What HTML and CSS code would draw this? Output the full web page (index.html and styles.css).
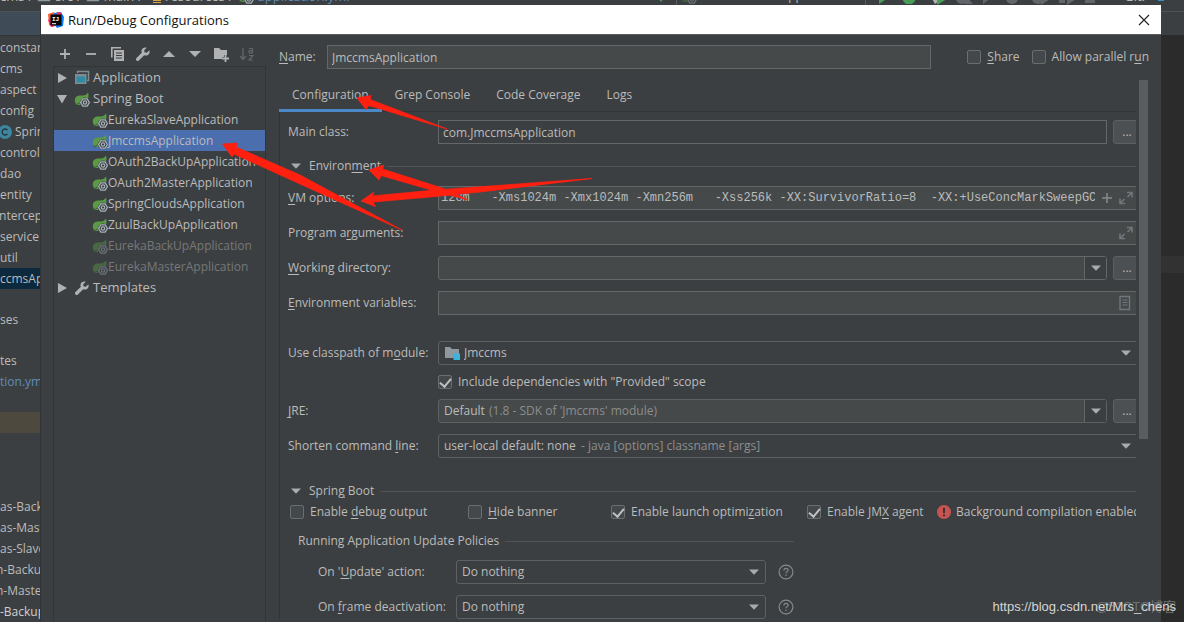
FILE: index.html
```html
<!DOCTYPE html>
<html lang="en">
<head>
<meta charset="utf-8">
<title>Run/Debug Configurations</title>
<link rel="stylesheet" href="styles.css">
</head>
<body>
<svg class="defs" aria-hidden="true">
  <symbol id="spring" viewBox="0 0 16 16">
    <path d="M1 11C0 6 3 4.500 7 4.500C10.500 4.500 12.500 4 14 1.500C15 5 14.500 8 12.500 10.500L6 14H2.500Z" fill="#5a9a45"/>
    <path d="M1 14C5 13 9 10 11 7" fill="none" stroke="#3c5a38" stroke-width="1"/>
    <circle cx="11" cy="11.500" r="5" fill="#3c3f41"/>
    <path d="M8.800 7.800h4.400l2.200 3.700l-2.200 3.700H8.800L6.600 11.500Z" fill="#3c3f41" stroke="#a5b0b8" stroke-width="1.300"/>
    <circle cx="11" cy="11.500" r="1.700" fill="none" stroke="#a5b0b8" stroke-width="1.200"/>
  </symbol>
  <symbol id="wrench" viewBox="0 0 16 16">
    <path d="M14.300 4.200L11.800 6.700L9.500 6.300L9.200 4.200L11.700 1.700C9.500 .9 7.200 2 6.600 4C6.300 5 6.400 5.900 6.800 6.800L1.500 12.100C.8 12.800 .8 13.800 1.500 14.500S3.200 15.200 3.900 14.500L9.200 9.200C11.400 10.100 13.800 9 14.500 6.900C14.800 6 14.700 5 14.300 4.200Z" fill="#afb1b3"/>
  </symbol>
  <symbol id="folder" viewBox="0 0 16 16">
    <path d="M1 2h5.500l2 2H15v10H1Z" fill="#8d989f"/>
  </symbol>
  <symbol id="expand" viewBox="0 0 14 14">
    <path d="M8 1.500h5v5M13 1.500L8.500 6M6 12.500H1v-5M1 12.500L5.500 8" fill="none" stroke="#70777b" stroke-width="1.600"/>
  </symbol>
  <symbol id="down" viewBox="0 0 10 6"><path d="M0 .5h10L5 5.700Z" fill="#a8aaab"/></symbol>
  <symbol id="help" viewBox="0 0 16 16">
    <circle cx="8" cy="8" r="6.900" fill="none" stroke="#868a8c" stroke-width="1.200"/>
    <path d="M5.900 6.400C5.900 5 6.800 4.300 8 4.300S10.100 5 10.100 6.200C10.100 7.600 8 7.700 8 9.300M8 10.500v1.400" fill="none" stroke="#868a8c" stroke-width="1.200"/>
  </symbol>
</svg>

<div class="ide">
  <header class="navbar">
    <nav class="crumbs">
      <span>cms</span><span>/</span>
      <svg class="i14"><use href="#folder"/></svg><span>src</span><span>/</span>
      <svg class="i14"><use href="#folder"/></svg><span>main</span><span>/</span>
      <svg class="i14" viewBox="0 0 14 14"><path d="M0 1h5l2 2h7v8H0Z" fill="#8d989f"/><path d="M6 9h8M6 11.500h8M6 13.500h8" stroke="#d9a343"/></svg><span>resources</span><span>/</span>
      <svg class="i16"><use href="#spring"/></svg><span class="blue">application.yml</span>
    </nav>
    <div class="runbar">
      <svg class="i14" viewBox="0 0 14 14"><path d="M2 5l7-5l3 8l-4 5Z" fill="#499c54"/></svg>
      <span class="runname"><svg class="i16 dim"><use href="#spring"/></svg>EurekaMasterApplication</span>
      <svg class="tools" viewBox="0 0 240 18">
        <path d="M4 4l10 6.500L4 17Z" fill="#499c54"/><path d="M28 8h12v6l-3 3h-6l-3-3Z" fill="#499c54"/>
        <path d="M55 8h9v6l-4 3Z" fill="#afb1b3"/><path d="M62 6l10 6l-10 6Z" fill="#499c54"/>
        <g fill="#62666a"><circle cx="87" cy="11" r="6"/><path d="M90 8l8 9h-8ZM108 5l8 6l-8 6Z"/><circle cx="137" cy="11" r="6"/><circle cx="163" cy="11" r="6"/><path d="M166 7l9 5l-9 6ZM184 8h6v8h-6ZM192 6l9 6l-9 6ZM210 7h10v9h-10Z"/></g>
      </svg>
      <span>Git:</span>
      <svg class="i14" viewBox="0 0 14 14"><path d="M4 4h6v8H4Z" fill="#3592c4"/></svg>
    </div>
  </header>
  <div class="workspace">
    <aside class="project">
      <div class="projecthead"></div>
      <ul class="files">
        <li>constant</li><li>cms</li><li>aspect</li><li>config</li>
        <li><svg class="i14" viewBox="0 0 14 14"><circle cx="5" cy="7" r="7" fill="#3e86a0"/><path d="M7.500 5.200A3 3 0 1 0 7.500 8.800" fill="none" stroke="#263238" stroke-width="1.300"/></svg>Spring</li>
        <li>controller</li><li>dao</li><li>entity</li><li class="cut">intercept</li><li>service</li><li>util</li>
        <li class="picked">ccmsApp</li><li class="blank"></li><li>ses</li><li class="blank"></li><li>tes</li>
        <li class="blue">tion.yml</li><li class="blank"></li><li class="brown"></li><li class="space"></li>
        <li>as-Backup</li><li>as-Master</li><li>as-Slave</li><li class="cut">n-Backup</li><li class="cut">n-Master</li><li class="strong">-Backup</li>
      </ul>
    </aside>
    <main class="editor"><div class="caretline"></div></main>
  </div>
</div>

<section class="dialog" role="dialog" aria-labelledby="title">
  <header class="titlebar">
    <svg class="i16" viewBox="0 0 16 16"><path d="M0 2L6 0L8 8L5 15L1 13Z" fill="#f9623a"/><path d="M6 1L13 0L16 5L15 14L9 16L6 12Z" fill="#087cfa"/><path d="M9 0L14 1L13 4H8Z" fill="#fe2857"/><path d="M0 8L5 5L7 14L3 15Z" fill="#fe2857"/><path d="M2.500 2.500h11v11h-11Z" fill="#050505"/><text class="logo" x="4" y="9">IJ</text><path d="M4 11.700h4" stroke="#fff"/></svg>
    <h1 id="title">Run/Debug Configurations</h1>
    <button class="close" aria-label="Close"><svg viewBox="0 0 12 12"><path d="M1 1l10 10M11 1L1 11" stroke="#222" stroke-width="1.100"/></svg></button>
  </header>
  <div class="body">
    <div class="left">
      <div class="toolbar">
        <button aria-label="Add"><svg class="i16" viewBox="0 0 16 16"><path d="M8 3v10M3 8h10" stroke="#afb1b3" stroke-width="1.800"/></svg></button>
        <button aria-label="Remove"><svg class="i16" viewBox="0 0 16 16"><path d="M3 8h10" stroke="#afb1b3" stroke-width="1.800"/></svg></button>
        <button aria-label="Copy"><svg class="i16" viewBox="0 0 16 16"><path d="M2.800 11.500V1.800H12" fill="none" stroke="#afb1b3" stroke-width="1.600"/><path d="M5 4h10v11H5Z" fill="#afb1b3"/><path d="M7 7h6M7 9.500h6M7 12h6" stroke="#3c3f41"/></svg></button>
        <button aria-label="Edit defaults"><svg class="i16"><use href="#wrench"/></svg></button>
        <button aria-label="Move up"><svg class="i16" viewBox="0 0 16 16"><path d="M2 11h12L8 5Z" fill="#afb1b3"/></svg></button>
        <button aria-label="Move down"><svg class="i16" viewBox="0 0 16 16"><path d="M2 5h12l-6 6Z" fill="#afb1b3"/></svg></button>
        <button aria-label="New folder"><svg class="i16" viewBox="0 0 16 16"><path d="M1 2h5l2 2h6v5h-3v2H9v2H1Z" fill="#afb1b3"/><path d="M12.500 9v7M9 12.500h7" stroke="#afb1b3" stroke-width="1.800"/></svg></button>
        <button aria-label="Sort" disabled><svg class="i16" viewBox="0 0 16 16"><path d="M4 2v11M1 10l3 3.500L7 10" fill="none" stroke="#626567" stroke-width="1.400"/><path d="M10 2.500h3.500v4.300H10.200V4.700h3.300M10 9.500h4l-4 4.500h4.200" fill="none" stroke="#626567" stroke-width="1.200"/></svg></button>
      </div>
      <ul class="tree">
        <li class="group"><svg class="twist" viewBox="0 0 10 10"><path d="M1 0l9 5l-9 5Z" fill="#afb1b3"/></svg><svg class="i16" viewBox="0 0 16 16"><path d="M3.500 3V1.500h11v9H13" fill="none" stroke="#7d8b93" stroke-width="1.500"/><path d="M1 4h11.500v10H1Z" fill="#7d8b93"/><path d="M2.500 6.500H11v6H2.500Z" fill="#2f8ba5"/></svg>Application</li>
        <li class="group"><svg class="twist" viewBox="0 0 10 10"><path d="M0 1h10l-5 8.500Z" fill="#afb1b3"/></svg><svg class="i16"><use href="#spring"/></svg>Spring Boot</li>
        <li class="leaf"><svg class="i16"><use href="#spring"/></svg>EurekaSlaveApplication</li>
        <li class="leaf selected"><svg class="i16"><use href="#spring"/></svg>JmccmsApplication</li>
        <li class="leaf"><svg class="i16"><use href="#spring"/></svg>OAuth2BackUpApplication</li>
        <li class="leaf"><svg class="i16"><use href="#spring"/></svg>OAuth2MasterApplication</li>
        <li class="leaf"><svg class="i16"><use href="#spring"/></svg>SpringCloudsApplication</li>
        <li class="leaf"><svg class="i16"><use href="#spring"/></svg>ZuulBackUpApplication</li>
        <li class="leaf dim"><svg class="i16"><use href="#spring"/></svg>EurekaBackUpApplication</li>
        <li class="leaf dim"><svg class="i16"><use href="#spring"/></svg>EurekaMasterApplication</li>
        <li class="group"><svg class="twist" viewBox="0 0 10 10"><path d="M1 0l9 5l-9 5Z" fill="#afb1b3"/></svg><svg class="i16"><use href="#wrench"/></svg>Templates</li>
      </ul>
    </div>
    <div class="right">
      <div class="namerow">
        <label for="name"><u>N</u>ame:</label>
        <input class="field" id="name" type="text" value="JmccmsApplication">
        <label class="check"><input type="checkbox"><span><u>S</u>hare</span></label>
        <label class="check"><input type="checkbox"><span>Allow parallel r<u>u</u>n</span></label>
      </div>
      <div class="scroller">
        <div class="view">
          <div class="tabs" role="tablist">
            <button class="tab active" role="tab">Configuration</button>
            <button class="tab" role="tab">Grep Console</button>
            <button class="tab" role="tab">Code Coverage</button>
            <button class="tab" role="tab">Logs</button>
          </div>
          <div class="panel">
            <div class="row"><label for="main">Main class:</label><div class="control"><input class="field plain" id="main" type="text" value="com.JmccmsApplication"><button class="more">...</button></div></div>
            <div class="separator"><svg class="down"><use href="#down"/></svg><h2>Environ<u>m</u>ent</h2></div>
            <div class="row"><label for="vm"><u>V</u>M options:</label><div class="field box"><input class="mono" id="vm" type="text" value="128m   -Xms1024m -Xmx1024m -Xmn256m   -Xss256k -XX:SurvivorRatio=8  -XX:+UseConcMarkSweepGC"><svg class="i14" viewBox="0 0 14 14"><path d="M7 2v10M2 7h10" stroke="#858a8d" stroke-width="1.500"/></svg><svg class="i14"><use href="#expand"/></svg></div></div>
            <div class="row"><label for="args">Program a<u>r</u>guments:</label><div class="field box"><input id="args" type="text"><svg class="i14"><use href="#expand"/></svg></div></div>
            <div class="row"><label for="dir"><u>W</u>orking directory:</label><div class="control"><div class="combo"><input id="dir" type="text"><button class="drop" aria-label="Show list"><svg class="down"><use href="#down"/></svg></button></div><button class="more">...</button></div></div>
            <div class="row"><label for="env"><u>E</u>nvironment variables:</label><div class="field box"><input id="env" type="text"><svg class="i16" viewBox="0 0 16 16"><path d="M3 1.500h9.500v13H3Z" fill="none" stroke="#70777b" stroke-width="1.400"/><path d="M5.500 5h5M5.500 7.500h5M5.500 10h5" stroke="#70777b"/></svg></div></div>
            <div class="row apart"><label for="module">Use classpath of m<u>o</u>dule:</label><div class="pick"><svg class="i16 lead" viewBox="0 0 16 16"><path d="M1 2h5l2 2h7v9H1Z" fill="#8d989f"/><path d="M9.500 8.500H16V15H9.500Z" fill="#3db2df"/></svg><select class="withicon" id="module"><option>Jmccms</option></select><svg class="down"><use href="#down"/></svg></div></div>
            <div class="row slim"><span></span><label class="check"><input type="checkbox" checked><span>Include dependencies with "Provided" scope</span></label></div>
            <div class="row"><label for="jre"><u>J</u>RE:</label><div class="control"><div class="pick split"><select id="jre"><option>Default</option></select><span class="hint jre">(1.8 - SDK of 'Jmccms' module)</span><span class="cell"><svg class="down"><use href="#down"/></svg></span></div><button class="more">...</button></div></div>
            <div class="row"><label for="shorten">Shorten command <u>l</u>ine:</label><div class="pick"><select id="shorten"><option>user-local default: none</option></select><span class="hint cmd">- java [options] classname [args]</span><svg class="down"><use href="#down"/></svg></div></div>
            <div class="boot">
              <div class="separator"><svg class="down"><use href="#down"/></svg><h2>Sprin<u>g</u> Boot</h2></div>
              <div class="checks">
                <label class="check"><input type="checkbox"><span>Enable <u>d</u>ebug output</span></label>
                <label class="check"><input type="checkbox"><span><u>H</u>ide banner</span></label>
                <label class="check"><input type="checkbox" checked><span>Enable launch optimi<u>z</u>ation</span></label>
                <label class="check"><input type="checkbox" checked><span>Enable JM<u>X</u> agent</span></label>
                <div class="notice"><svg class="i14" viewBox="0 0 14 14"><circle cx="7" cy="7" r="7" fill="#c75450"/><path d="M7 2.800v5.200M7 9.300v2" stroke="#3c3032" stroke-width="2"/></svg>Background compilation enabled</div>
              </div>
              <div class="policies">
                <div class="separator"><h2>Running Application Update Policies</h2></div>
                <div class="policy"><label for="upd">On '<u>U</u>pdate' action:</label><div class="pick"><select id="upd"><option>Do nothing</option></select><svg class="down"><use href="#down"/></svg></div><button class="ask" aria-label="Help"><svg class="i16"><use href="#help"/></svg></button></div>
                <div class="policy"><label for="frame">On <u>f</u>rame deactivation:</label><div class="pick"><select id="frame"><option>Do nothing</option></select><svg class="down"><use href="#down"/></svg></div><button class="ask" aria-label="Help"><svg class="i16"><use href="#help"/></svg></button></div>
              </div>
            </div>
          </div>
        </div>
        <div class="bar"></div>
      </div>
    </div>
  </div>
</section>

<svg class="arrows" width="600" height="240" viewBox="0 0 600 240" aria-hidden="true">
  <path d="M357 98L371 95.500L370 99.500L447 129L369 105.500L366 109.500Z"/>
  <path d="M369 170L384 165L382.500 169L442 188L468 200L438 192L381 175.500L379 180Z"/>
  <path d="M361 201L374 192L372 196L430 190.500L592 178.500L480 192L430 197L373 202L375.500 206.500Z"/>
  <path d="M222.500 144L237.500 143L236 147L300 175L402 230L300 184L234 154L232 157Z"/>
</svg>
<div class="marks"><span class="mark faint">@51CTO博客</span><span class="mark">https://blog.csdn.net/Mrs_chens</span></div>
</body>
</html>
```
FILE: styles.css
```css
* { box-sizing: border-box; }
body {
  margin: 0;
  height: 100vh;
  overflow: hidden;
  position: relative;
  background: #3c3f41;
  color: #bbbbbb;
  font: 12px/20px "Open Sans", "Noto Sans", sans-serif;
}
ul { list-style: none; margin: 0; padding: 0; }
h1, h2 { margin: 0; font-weight: 400; }
svg { display: block; flex: none; }
button, input, select { font: inherit; color: inherit; margin: 0; padding: 0; border: 0; background: none; border-radius: 0; outline: 0; }
u { text-decoration: underline; text-underline-offset: 2px; }
.defs { position: absolute; width: 0; height: 0; }
.i14 { width: 14px; height: 14px; }
.i16 { width: 16px; height: 16px; }
.blue { color: #5c8dbc; }
.dim { opacity: 0.45; }

/* IDE window behind the dialog */
.ide { height: 100%; display: flex; flex-direction: column; }
.navbar { height: 12px; display: flex; justify-content: space-between; align-items: flex-end; padding-bottom: 5px; border-bottom: 1px solid #505355; flex: none; overflow: hidden; font-size: 13px; }
.crumbs, .runbar { display: flex; align-items: center; gap: 4px; height: 20px; white-space: nowrap; }
.runbar { padding-right: 16px; gap: 9px; }
.runname { display: flex; align-items: center; gap: 6px; padding-left: 4px; border-left: 1px solid #5a5d5f; border-right: 1px solid #5a5d5f; padding-right: 22px; }
.runname { font-size: 12px; }
.tools { width: 240px; height: 18px; }
.workspace { flex: 1; display: flex; min-height: 0; }
.project { width: 41px; overflow: hidden; white-space: nowrap; border-right: 1px solid #323537; }
.projecthead { height: 24px; background: #3f4b57; border-bottom: 1px solid #323537; margin-bottom: 1px; }
.files li { height: 21px; line-height: 21px; display: flex; gap: 1px; align-items: center; }
.files .cut { margin-left: -4px; }
.files .blank { height: 20px; }
.files .space { height: 63px; }
.files .picked { background: #0d293e; }
.files .brown { background: #4e493e; }
.strong { color: #d0d0d0; }
.editor { flex: 1; background: #2b2b2b; border-top: 23px solid #3c3f41; padding-top: 221px; }
.caretline { height: 17px; background: #323232; }

/* Dialog */
.dialog { position: absolute; left: 41px; right: 23px; top: 5px; bottom: 0; background: #3c3f41; display: flex; flex-direction: column; overflow: hidden; }
.titlebar { height: 30px; flex: none; background: #fff; color: #111; display: flex; align-items: center; gap: 4px; padding: 0 11px 0 7px; border-bottom: 1px solid #5b5e60; }
.titlebar h1 { font-size: 13px; flex: 1; }
.logo { font: bold 6px "Liberation Mono", monospace; fill: #fff; }
.close svg { width: 12px; height: 12px; }
.body { flex: 1; display: flex; min-height: 0; padding: 0 12px; gap: 13px; }
.left { width: 213px; display: flex; flex-direction: column; flex: none; }
.toolbar { height: 31px; padding: 6px 8px 0 4px; display: flex; gap: 10px; align-items: center; flex: none; }
.tree { flex: 1; border: solid #323537; border-width: 1px 1px 0; white-space: nowrap; }
.tree li { height: 21px; line-height: 21px; display: flex; align-items: center; }
.group { padding-left: 3px; font-size: 13px; }
.group .i16 { margin: 0 3px 0 7px; }
.twist { width: 10px; height: 10px; }
.leaf { padding-left: 38px; }
.selected { background: #4b6eaf; }

.right { flex: 1; min-width: 0; display: flex; flex-direction: column; }
.namerow { display: flex; align-items: center; padding-top: 10px; }
.namerow > label:first-child { width: 48px; }
.field { height: 24px; border: 1px solid #646768; background: #45494a; }
input.field { flex: 1; min-width: 0; padding: 0 4px; }
.field.plain { background: #3c3f41; }
.check { display: flex; align-items: center; gap: 6px; white-space: nowrap; }
.namerow .check { margin-left: 12px; }
.namerow .field + .check { margin-left: 36px; }
.check input { appearance: none; width: 14px; height: 14px; border: 1px solid #6b6e70; border-radius: 2px; background: #43494a; flex: none; display: grid; place-items: center; }
.check input:checked::after { content: ""; width: 5px; height: 9px; border: solid #c0c2c3; border-width: 0 2px 2px 0; transform: rotate(40deg); margin-bottom: 2px; }
.scroller { flex: 1; min-height: 0; margin-top: 11px; display: flex; gap: 3px; padding-right: 1px; }
.bar { width: 9px; height: 359px; background: #5a5c5e; flex: none; }
.view { flex: 1; min-width: 0; overflow: hidden; }
.tabs { display: flex; height: 32px; box-shadow: inset 0 -1px #323537; }
.tab { padding: 0 13px; height: 32px; border-bottom: 3px solid transparent; }
.tab.active { border-bottom-color: #4a88c7; }
.panel { border-left: 1px solid #323537; padding: 8px 0 0 8px; margin-right: -5px; display: flex; flex-direction: column; gap: 11px; }
.row { display: grid; grid-template: 100% / 150px minmax(0, 1fr); align-items: center; height: 24px; flex: none; white-space: nowrap; }
.apart { margin-top: 15px; }
.slim { height: 12px; }
.control { display: flex; gap: 6px; min-width: 0; }
.more { width: 28px; height: 24px; border: 1px solid #5e6163; border-radius: 3px; background: #4c5052; }
.box { display: flex; align-items: center; gap: 5px; padding: 0 7px 0 2px; }
.box input { flex: 1; min-width: 0; height: 22px; }
.box .mono { font: 12px "Liberation Mono", monospace; }
.combo { flex: 1; display: flex; height: 24px; border: 1px solid #646768; border-radius: 3px; background: #45494a; }
.combo input { flex: 1; min-width: 0; padding: 0 5px; }
.drop, .cell { width: 22px; height: 22px; display: grid; place-items: center; border-left: 1px solid #646768; background: #3c3f41; }
.down { width: 10px; height: 6px; }

/* Drop-down: select, hint and arrow share one grid cell */
.pick { display: grid; flex: 1; min-width: 0; align-items: center; height: 24px; border: 1px solid #5e6163; border-radius: 3px; }
.pick > * { grid-area: 1 / 1; }
.pick select { appearance: none; width: 100%; height: 22px; padding: 0 5px; }
.pick select.withicon { padding-left: 25px; }
.pick > .down { justify-self: end; margin-right: 9px; pointer-events: none; }
.policy .pick > .down { margin-right: 6px; }
.lead { margin-left: 5px; }
.split { background: #45494a; }
.cell { justify-self: end; pointer-events: none; }
.hint { color: #8c8e8f; pointer-events: none; }
.jre { padding-left: 50px; }
.cmd { padding-left: 142px; }

.separator { height: 20px; padding-top: 2px; flex: none; display: flex; align-items: center; }
.separator h2 { font-size: 12px; }
.separator .down { margin: 0 8px 0 3px; }
.separator::after { content: ""; flex: 1; height: 1px; background: #515456; margin-left: 6px; }
.boot { margin-top: 11px; }
.checks { display: grid; grid-template-columns: 178px 143px 196px 130px max-content; height: 24px; align-items: center; padding-left: 2px; white-space: nowrap; }
.notice { display: flex; gap: 5px; align-items: center; }
.policies { width: 496px; margin: 7px 0 0 10px; display: flex; flex-direction: column; gap: 11px; }
.policies .separator { height: 18px; }
.policy { display: flex; align-items: center; padding-left: 20px; gap: 12px; }
.policy label { width: 126px; white-space: nowrap; }

/* Annotations */
.arrows { position: absolute; left: 0; top: 0; fill: #ff2010; stroke: #ff2010; stroke-width: 0.8; pointer-events: none; }
.marks { position: absolute; right: 8px; bottom: 5px; display: grid; justify-items: end; font: 13px/20px "Liberation Sans", "Noto Sans CJK SC", sans-serif; white-space: nowrap; }
.mark { grid-area: 1 / 1; color: #d4d5d5; }
.faint { color: #707273; }
```
